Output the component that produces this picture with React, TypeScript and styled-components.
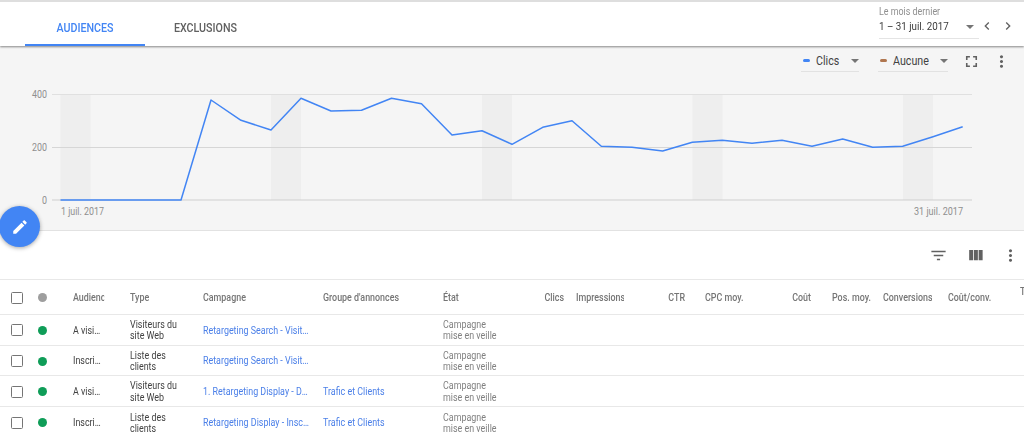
import React from "react";
import styled, { createGlobalStyle, css } from "styled-components";

const GlobalStyle = createGlobalStyle`
html, body {
  margin: 0;
  height: 439px;
  overflow: hidden;
  background: #fff;
  font-family: Roboto, "Liberation Sans", sans-serif;
}
* { box-sizing: border-box; }
`;

const SQUEEZE = 0.89;
const squeezed = (origin: string) => css`
  transform: scaleX(${SQUEEZE});
  transform-origin: ${origin} center;
`;

const Page = styled.div`
  position: relative;
  width: 1024px;
  height: 439px;
  overflow: hidden;
  filter: blur(0.3px);
`;

const Header = styled.header`
  position: relative;
  z-index: 2;
  display: flex;
  height: 46px;
  padding-left: 25px;
  background: #fff;
  border-top: 2px solid #dedede;
  box-shadow: 0 1px 2px rgba(0, 0, 0, 0.45);
`;

const Tab = styled.div<{ $active?: boolean }>`
  display: flex;
  align-items: center;
  justify-content: center;
  width: 120px;
  padding-top: 10px;
  border-bottom: 2px solid ${(p) => (p.$active ? "#4285f4" : "transparent")};
`;

const TabLabel = styled.span<{ $active?: boolean }>`
  ${squeezed("center")}
  font-size: 12px;
  font-weight: 500;
  color: ${(p) => (p.$active ? "#4285f4" : "#616161")};
`;

const DateArea = styled.div`
  display: flex;
  align-items: flex-start;
  margin-left: auto;
  padding-top: 4px;
  padding-right: 8px;
`;

const DateBlock = styled.div`
  width: 100px;
`;

const DateLabel = styled.div`
  ${squeezed("left")}
  font-size: 10px;
  line-height: 11px;
  color: #8f8f8f;
`;

const DateValue = styled.div`
  display: flex;
  align-items: center;
  justify-content: space-between;
  height: 22px;
  padding: 0 5px 2px 0;
  border-bottom: 1px solid #e4e4e4;
`;

const DateText = styled.span`
  ${squeezed("left")}
  font-size: 11px;
  color: #3c3c3c;
`;

const NavIcons = styled.div`
  display: flex;
  gap: 5px;
  margin-top: 12px;
  color: #616161;
`;

const Caret = styled.span`
  width: 0;
  height: 0;
  border-left: 4px solid transparent;
  border-right: 4px solid transparent;
  border-top: 4px solid #757575;
`;

const ChartPanel = styled.section`
  height: 185px;
  background: #f5f5f5;
  border-bottom: 1px solid #e2e2e2;
`;

const ChartBar = styled.div`
  display: flex;
  align-items: flex-start;
  justify-content: flex-end;
  height: 34px;
  padding-top: 6px;
  padding-right: 13px;
`;

const MetricChip = styled.div<{ $width: number }>`
  display: flex;
  align-items: center;
  gap: 6px;
  width: ${(p) => p.$width}px;
  height: 20px;
  padding: 0 0 2px 2px;
  margin-right: 19px;
  border-bottom: 1px solid #e2e2e2;

  ${Caret} {
    margin-left: auto;
  }
`;

const MetricLabel = styled.span`
  ${squeezed("left")}
  font-size: 12px;
  color: #424242;
`;

const MetricDash = styled.span<{ $color: string }>`
  width: 7px;
  height: 3px;
  border-radius: 2px;
  background: ${(p) => p.$color};
`;

const ChartIcons = styled.div`
  display: flex;
  gap: 11px;
  margin-left: -5px;
  color: #616161;
`;

const ChartSvg = styled.svg`
  display: block;
`;

const AxisText = styled.text`
  font-size: 10px;
  fill: #8f8f8f;
`;

const Fab = styled.button`
  position: absolute;
  left: -1px;
  top: 206px;
  z-index: 3;
  display: flex;
  align-items: center;
  justify-content: center;
  width: 41px;
  height: 41px;
  padding: 0;
  border: 0;
  border-radius: 50%;
  color: #fff;
  background: #4285f4;
  box-shadow: 0 1px 4px rgba(0, 0, 0, 0.35);
`;

const ActionBar = styled.div`
  display: flex;
  align-items: center;
  justify-content: flex-end;
  height: 48px;
  padding-top: 1px;
  padding-right: 4px;
  color: #616161;
`;

const ActionIcon = styled.span<{ $gap: number }>`
  display: flex;
  margin-left: ${(p) => p.$gap}px;
`;

const TABLE_COLUMNS =
  "26px 36px 57px 73px 120px 120px 87px 46px 61px 68px 67px 60px 51px 65px 72px 1fr";

const HeadRow = styled.div`
  display: grid;
  grid-template-columns: ${TABLE_COLUMNS};
  align-items: center;
  height: 36px;
  padding: 1px 0 0 11px;
  border-top: 1px solid #e8e8e8;
  border-bottom: 1px solid #e8e8e8;
  font-size: 10px;
  font-weight: 500;
  color: #757575;
`;

const Row = styled.div`
  display: grid;
  grid-template-columns: ${TABLE_COLUMNS};
  align-items: center;
  height: 30.7px;
  padding: 1px 0 0 11px;
  border-bottom: 1px solid #e8e8e8;
  font-size: 10px;
  line-height: 11.4px;
  color: #424242;

  &:last-child {
    border-bottom: 0;
  }
`;

const HeadCell = styled.div<{ $right?: number; $clip?: number; $raised?: boolean }>`
  ${(p) => squeezed(p.$right !== undefined ? "right" : "left")}
  overflow: ${(p) => (p.$clip ? "hidden" : "visible")};
  white-space: nowrap;
  text-align: ${(p) => (p.$right !== undefined ? "right" : "left")};
  margin-right: ${(p) => p.$right ?? 0}px;
  width: ${(p) => (p.$clip ? `${p.$clip / SQUEEZE}px` : "auto")};
  margin-top: ${(p) => (p.$raised ? "-12px" : "0")};
`;

const Checkbox = styled.span`
  display: block;
  width: 12px;
  height: 12px;
  border: 1.5px solid #757575;
  border-radius: 1.5px;
`;

const StatusDot = styled.span<{ $color: string }>`
  display: block;
  width: 9px;
  height: 9px;
  margin-left: 0.5px;
  border-radius: 50%;
  background: ${(p) => p.$color};
`;

const TruncatedCell = styled.div<{ $width: number }>`
  ${squeezed("left")}
  width: ${(p) => p.$width / SQUEEZE}px;
  overflow: hidden;
  white-space: nowrap;
  text-overflow: ellipsis;
`;

const LinkCell = styled(TruncatedCell)`
  color: #4a7fe8;
`;

const TypeCell = styled.div`
  ${squeezed("left")}
  white-space: nowrap;
`;

const StateCell = styled(TypeCell)`
  color: #808080;
`;

const ICONS = {
  chevronLeft: "M15.41 7.41L14 6l-6 6 6 6 1.41-1.41L10.83 12z",
  chevronRight: "M8.59 16.59L10 18l6-6-6-6-1.41 1.41L13.17 12z",
  fullscreen: "M7 14H5v5h5v-2H7v-3zm-2-4h2V7h3V5H5v5zm12 7h-3v2h5v-5h-2v3zM14 5v2h3v3h2V5h-5z",
  more: "M12 8c1.1 0 2-.9 2-2s-.9-2-2-2-2 .9-2 2 .9 2 2 2zm0 2c-1.1 0-2 .9-2 2s.9 2 2 2 2-.9 2-2-.9-2-2-2zm0 6c-1.1 0-2 .9-2 2s.9 2 2 2 2-.9 2-2-.9-2-2-2z",
  filter: "M10 18h4v-2h-4v2zM3 6v2h18V6H3zm3 7h12v-2H6v2z",
  columns: "M10 18h5V5h-5v13zm-6 0h5V5H4v13zM16 5v13h5V5h-5z",
  edit: "M3 17.25V21h3.75L17.81 9.94l-3.75-3.75L3 17.25zM20.71 7.04c.39-.39.39-1.02 0-1.41l-2.34-2.34c-.39-.39-1.02-.39-1.41 0l-1.83 1.83 3.75 3.75 1.83-1.83z",
};

function Icon({ name, size }: { name: keyof typeof ICONS; size: number }) {
  return (
    <svg width={size} height={size} viewBox="0 0 24 24" fill="currentColor" style={{ display: "block" }}>
      <path d={ICONS[name]} />
    </svg>
  );
}

// page coordinates, the svg starts at y=80
const CHART_TOP = 80;
const linePoints: [number, number][] = [
  [60.5, 200], [90.6, 200], [120.7, 200], [150.8, 200], [181, 200], [211, 100],
  [241, 120.3], [271, 130], [301, 98.3], [331, 111], [361.5, 110.3], [391.5, 98.3],
  [421.5, 103.7], [452, 135], [482, 130.7], [512, 144.3], [542.7, 127.3], [572, 120.7],
  [601.3, 146.3], [632, 147.3], [662.7, 151], [692.3, 142.3], [722.3, 140.3], [752, 143.3],
  [782, 140.3], [812, 146.3], [842.7, 139], [872.7, 147.3], [902.7, 146.3], [933, 136.7],
  [962.7, 126.7],
];
const weekendBands = [60.5, 271, 482, 692.5, 903];
const gridLines = [
  { label: "400", y: 94.5, color: "#e0e0e0", width: 15 },
  { label: "200", y: 147.5, color: "#d6d6d6", width: 15 },
  { label: "0", y: 200, color: "#cfcfcf", width: 5 },
];

function Chart() {
  return (
    <ChartSvg width={1024} height={150} viewBox={`0 ${CHART_TOP} 1024 150`}>
      {weekendBands.map((x) => (
        <rect key={x} x={x} y={94.5} width={30} height={105.5} fill="#eeeeee" />
      ))}
      {gridLines.map((g) => (
        <g key={g.label}>
          <line x1={52} x2={972} y1={g.y} y2={g.y} stroke={g.color} strokeWidth={1} />
          <AxisText x={47 - g.width} y={g.y + 3.5} textLength={g.width} lengthAdjust="spacingAndGlyphs">
            {g.label}
          </AxisText>
        </g>
      ))}
      <polyline
        points={linePoints.map((p) => p.join(",")).join(" ")}
        fill="none"
        stroke="#4285f4"
        strokeWidth={1.5}
        strokeLinejoin="round"
      />
      <AxisText x={61} y={214.5} textLength={43} lengthAdjust="spacingAndGlyphs">1 juil. 2017</AxisText>
      <AxisText x={914} y={214.5} textLength={49} lengthAdjust="spacingAndGlyphs">31 juil. 2017</AxisText>
    </ChartSvg>
  );
}

const PAUSED = ["Campagne", "mise en veille"];
const rows = [
  { audience: "A visiteurs", type: ["Visiteurs du", "site Web"], campaign: "Retargeting Search - Visiteurs du site", group: "" },
  { audience: "Inscrits", type: ["Liste des", "clients"], campaign: "Retargeting Search - Visiteurs du site", group: "" },
  { audience: "A visiteurs", type: ["Visiteurs du", "site Web"], campaign: "1. Retargeting Display - DSP", group: "Trafic et Clients" },
  { audience: "Inscrits", type: ["Liste des", "clients"], campaign: "Retargeting Display - Inscrits clients", group: "Trafic et Clients" },
];

function TwoLines({ lines }: { lines: string[] }) {
  return (
    <>
      {lines[0]}
      <br />
      {lines[1]}
    </>
  );
}

export default function App() {
  return (
    <Page>
      <GlobalStyle />
      <Header>
        <Tab $active><TabLabel $active>AUDIENCES</TabLabel></Tab>
        <Tab><TabLabel>EXCLUSIONS</TabLabel></Tab>
        <DateArea>
          <DateBlock>
            <DateLabel>Le mois dernier</DateLabel>
            <DateValue>
              <DateText>1 – 31 juil. 2017</DateText>
              <Caret />
            </DateValue>
          </DateBlock>
          <NavIcons>
            <Icon name="chevronLeft" size={16} />
            <Icon name="chevronRight" size={16} />
          </NavIcons>
        </DateArea>
      </Header>

      <ChartPanel>
        <ChartBar>
          <MetricChip $width={58}>
            <MetricDash $color="#4285f4" />
            <MetricLabel>Clics</MetricLabel>
            <Caret />
          </MetricChip>
          <MetricChip $width={70}>
            <MetricDash $color="#b0764f" />
            <MetricLabel>Aucune</MetricLabel>
            <Caret />
          </MetricChip>
          <ChartIcons>
            <Icon name="fullscreen" size={19} />
            <Icon name="more" size={19} />
          </ChartIcons>
        </ChartBar>
        <Chart />
      </ChartPanel>

      <Fab aria-label="Modifier">
        <Icon name="edit" size={18} />
      </Fab>

      <ActionBar>
        <ActionIcon $gap={0}><Icon name="filter" size={19} /></ActionIcon>
        <ActionIcon $gap={18}><Icon name="columns" size={19} /></ActionIcon>
        <ActionIcon $gap={16}><Icon name="more" size={19} /></ActionIcon>
      </ActionBar>

      <HeadRow>
        <Checkbox />
        <StatusDot $color="#9e9e9e" />
        <HeadCell $clip={31}>Audience</HeadCell>
        <HeadCell>Type</HeadCell>
        <HeadCell>Campagne</HeadCell>
        <HeadCell>Groupe d'annonces</HeadCell>
        <HeadCell>État</HeadCell>
        <HeadCell $right={12}>Clics</HeadCell>
        <HeadCell $clip={48}>Impressions</HeadCell>
        <HeadCell $right={20}>CTR</HeadCell>
        <HeadCell>CPC moy.</HeadCell>
        <HeadCell $right={21}>Coût</HeadCell>
        <HeadCell>Pos. moy.</HeadCell>
        <HeadCell $clip={49}>Conversions</HeadCell>
        <HeadCell>Coût/conv.</HeadCell>
        <HeadCell $raised>T</HeadCell>
      </HeadRow>

      {rows.map((row, i) => (
        <Row key={i}>
          <Checkbox />
          <StatusDot $color="#0f9d58" />
          <TruncatedCell $width={29}>{row.audience}</TruncatedCell>
          <TypeCell><TwoLines lines={row.type} /></TypeCell>
          <LinkCell $width={106.8}>{row.campaign}</LinkCell>
          <LinkCell $width={106.8}>{row.group}</LinkCell>
          <StateCell><TwoLines lines={PAUSED} /></StateCell>
        </Row>
      ))}
    </Page>
  );
}
